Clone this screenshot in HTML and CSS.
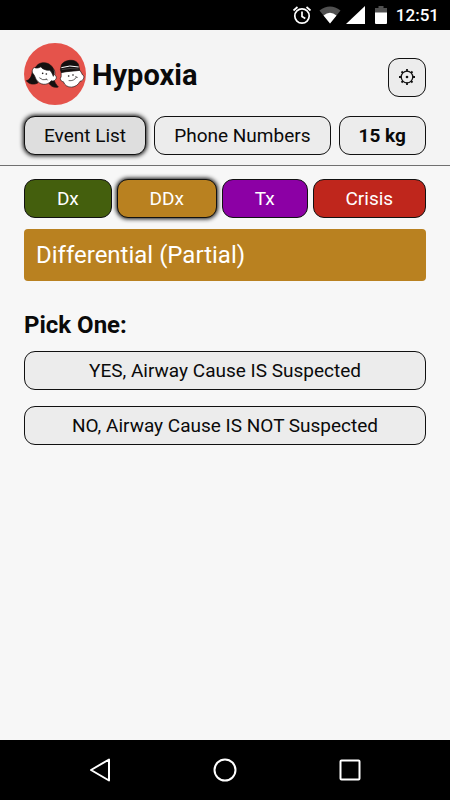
FILE: index.html
```html
<!DOCTYPE html>
<html lang="en">
<head>
<meta charset="utf-8">
<meta name="viewport" content="width=device-width, initial-scale=1">
<title>Hypoxia</title>
<link rel="stylesheet" href="styles.css">
</head>
<body>
<div class="status">
  <svg class="status-icons" viewBox="0 0 100 20" aria-hidden="true">
    <g fill="none" stroke="#fff" stroke-width="1.700">
      <circle cx="10" cy="11" r="7.200"/>
      <path d="M10 6.500v5l3.300 2M1.500 5.500l4-3.500M18.500 5.500l-4-3.500"/>
    </g>
    <path fill="#505050" d="M27.500 5.500Q38-2.500 48.500 5.500L38 18.500z"/>
    <path fill="#fff" d="M31.500 10.500Q38 5 44.500 10.500L38 18.500z"/>
    <path fill="#fff" d="M73 1v18H54z"/>
    <path fill="#505050" d="M83 3h3.500V1h5v2H95v5H83z"/>
    <path fill="#fff" d="M83 7.500h12V18q0 1-1 1H84q-1 0-1-1z"/>
  </svg>
  <time>12:51</time>
</div>
<header class="header">
  <div class="title-row">
    <svg class="logo" viewBox="27 24 186 186" aria-hidden="true">
      <circle cx="120" cy="117" r="93" fill="#e5534b"/>
      <g stroke="#151010" stroke-width="2" stroke-linejoin="round">
        <path fill="#151010" d="M52 109C50 126 44 135 34 137C42 149 60 150 69 143ZM116 128C117 141 124 149 130 156C119 159 108 155 102 145Z"/>
        <path fill="#fff" d="M63 98C52 94 48 112 56 118C59 121 60 127 64 134C75 151 97 153 109 137C121 142 130 125 119 120C123 105 111 93 95 92C82 88 69 89 63 98Z"/>
        <path fill="#151010" d="M61 99C68 80 99 77 112 96C118 104 119 115 115 124C111 116 111 111 104 106C91 106 80 101 78 95C73 98 68 100 61 99Z"/>
        <path fill="#fff" d="M139 110C137 119 141 124 136 130C137 137 140 140 145 140C153 163 185 161 195 139C206 138 211 122 202 119C199 112 197 109 193 105Z"/>
        <path fill="#151010" d="M138 95C139 74 186 67 191 91L194 106C178 109 158 108 139 113Q134 104 138 95Z"/>
      </g>
      <path fill="none" stroke="#fff" stroke-width="3" d="M139 98Q164 89 191 96"/>
      <path fill="none" stroke="#aaa" stroke-width="1" d="M140 104Q165 98 191 102"/>
      <g fill="#151010"><circle cx="83" cy="115" r="2.500"/><circle cx="94" cy="117" r="2.500"/><circle cx="161" cy="123" r="2.500"/><circle cx="174" cy="120" r="2.500"/></g>
      <path fill="none" stroke="#151010" stroke-width="2" stroke-linecap="round" d="M74 129Q82 137 94 134M94 131l3 4M162 137Q177 139 184 127M182 125l5 2"/>
    </svg>
    <h1 class="title">Hypoxia</h1>
    <button class="btn settings" type="button" aria-label="Settings">
      <svg class="gear" viewBox="0 0 18 18" fill="none" stroke="#111">
        <circle cx="9" cy="9" r="5.800" stroke-width="1.300"/>
        <path stroke-width="1.800" d="M9 1v2.500M9 14.500V17M1 9h2.500M14.500 9H17M3.500 3.500l1.500 1.500M13 13l1.500 1.500M14.500 3.500L13 5M5 13l-1.500 1.500"/>
        <circle cx="9" cy="9" r="1.300" fill="#111" stroke="none"/>
      </svg>
    </button>
  </div>
  <nav class="row">
    <button class="btn active" type="button">Event List</button>
    <button class="btn" type="button">Phone Numbers</button>
    <button class="btn strong" type="button">15 kg</button>
  </nav>
</header>
<main class="main">
  <nav class="row tabs">
    <button class="btn dx" type="button">Dx</button>
    <button class="btn ddx active" type="button">DDx</button>
    <button class="btn tx" type="button">Tx</button>
    <button class="btn crisis" type="button">Crisis</button>
  </nav>
  <h2 class="banner">Differential (Partial)</h2>
  <h3 class="prompt">Pick One:</h3>
  <div class="choices">
    <button class="btn" type="button">YES, Airway Cause IS Suspected</button>
    <button class="btn" type="button">NO, Airway Cause IS NOT Suspected</button>
  </div>
</main>
<footer class="navbar">
  <button class="nav-btn" type="button" aria-label="Back"><svg class="nav-icon" viewBox="0 0 26 26"><path d="M22 2.500v21L4 13z"/></svg></button>
  <button class="nav-btn" type="button" aria-label="Home"><svg class="nav-icon" viewBox="0 0 26 26"><circle cx="13" cy="13" r="10.500"/></svg></button>
  <button class="nav-btn" type="button" aria-label="Recent apps"><svg class="nav-icon" viewBox="0 0 26 26"><rect x="3.500" y="3.500" width="19" height="19" rx="1"/></svg></button>
</footer>
</body>
</html>
```
FILE: styles.css
```css
* {
  box-sizing: border-box;
}

body {
  margin: 0;
  min-height: 100vh;
  display: flex;
  flex-direction: column;
  background: #f7f7f7;
  color: #0a0a0a;
  font-family: Roboto, "Liberation Sans", sans-serif;
}

.status {
  display: flex;
  align-items: center;
  justify-content: flex-end;
  gap: 4px;
  height: 30px;
  padding: 0 11px;
  background: #000;
  color: #fff;
  font-size: 17px;
  font-weight: 500;
}

.status-icons {
  width: 100px;
  height: 20px;
}

.header {
  padding: 13px 24px 10px;
  background: #f4f4f4;
  border-bottom: 1px solid #707070;
}

.title-row {
  display: flex;
  align-items: center;
  gap: 6px;
  margin-bottom: 11px;
}

.logo {
  width: 62px;
  height: 62px;
}

.title {
  flex: 1;
  margin: 0;
  padding-top: 2px;
  font-size: 29px;
  font-weight: 700;
}

.btn {
  min-height: 39px;
  padding: 0 16px;
  border: 1px solid #111;
  border-radius: 11px;
  background: #ececec;
  color: #0a0a0a;
  font-family: inherit;
  font-size: 19px;
  line-height: 24px;
}

.settings {
  width: 38px;
  padding: 0;
  margin-top: 6px;
}

.gear {
  display: block;
  width: 18px;
  height: 18px;
  margin: 0 auto;
}

.row {
  display: flex;
  gap: 8px;
}

.row .btn {
  flex: 1 1 auto;
}

.btn.active {
  background: #dedede;
  box-shadow: 0 0 4px 1px #111;
}

.btn.strong {
  font-weight: 700;
}

.main {
  flex: 1;
  padding: 13px 24px;
}

.tabs {
  gap: 5px;
}

.tabs .btn {
  color: #fff;
}

.tabs .dx {
  background: #445f0d;
}

.tabs .ddx {
  background: #b98120;
}

.tabs .tx {
  background: #8c00a5;
}

.tabs .crisis {
  background: #bf261c;
}

.banner {
  margin: 11px 0 0;
  padding: 10px 12px;
  border-radius: 4px;
  background: #b98120;
  color: #fff;
  font-size: 24px;
  font-weight: 400;
  line-height: 32px;
}

.prompt {
  margin: 28px 0 10px;
  font-size: 24px;
  font-weight: 700;
  line-height: 32px;
}

.choices {
  display: grid;
  gap: 16px;
}

.navbar {
  display: flex;
  justify-content: center;
  gap: 73px;
  height: 60px;
  background: #000;
}

.nav-btn {
  width: 52px;
  padding: 0;
  border: 0;
  background: none;
}

.nav-icon {
  display: block;
  width: 26px;
  height: 26px;
  margin: 0 auto;
  fill: none;
  stroke: #fff;
  stroke-width: 2;
  stroke-linejoin: round;
}
```
